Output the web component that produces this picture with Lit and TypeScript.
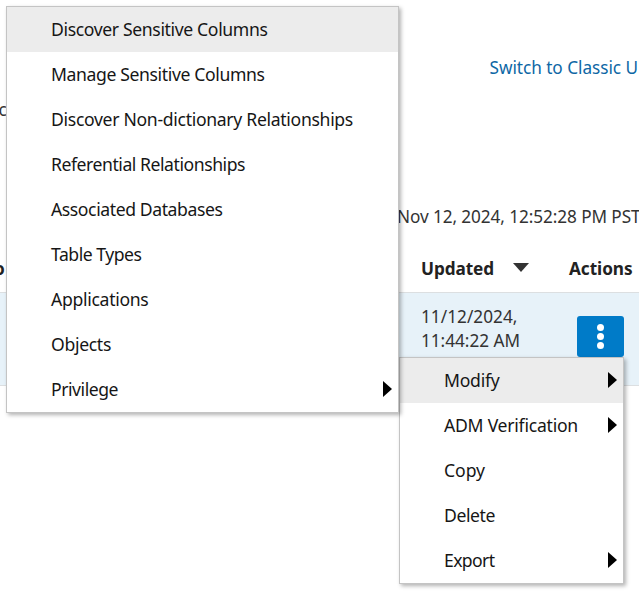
import { LitElement, html, css, nothing } from "lit";
import { customElement, property } from "lit/decorators.js";

interface Entry {
  label: string;
  width: number;
  active?: boolean;
  submenu?: boolean;
}

const MODIFY_ITEMS: Entry[] = [
  { label: "Discover Sensitive Columns", width: 216.5, active: true },
  { label: "Manage Sensitive Columns", width: 213.5 },
  { label: "Discover Non-dictionary Relationships", width: 302 },
  { label: "Referential Relationships", width: 194 },
  { label: "Associated Databases", width: 171.5 },
  { label: "Table Types", width: 90.5 },
  { label: "Applications", width: 97.5 },
  { label: "Objects", width: 60 },
  { label: "Privilege", width: 67, submenu: true },
];

const ACTION_ITEMS: Entry[] = [
  { label: "Modify", width: 55.5, active: true, submenu: true },
  { label: "ADM Verification", width: 134, submenu: true },
  { label: "Copy", width: 41 },
  { label: "Delete", width: 51 },
  { label: "Export", width: 50.5, submenu: true },
];

/** A single line of text whose tracking is tuned to fill a given width. */
@customElement("fit-text")
export class FitText extends LitElement {
  @property() text = "";
  @property({ type: Number }) width = 0;

  static styles = css`
    :host { display: block; white-space: nowrap; }
    .line { display: inline-block; }
  `;

  updated() {
    const line = this.renderRoot.querySelector<HTMLElement>(".line")!;
    line.style.letterSpacing = "0";
    const natural = line.getBoundingClientRect().width;
    line.style.letterSpacing = `${(this.width - natural) / this.text.length}px`;
  }

  render() {
    return html`<span class="line">${this.text}</span>`;
  }
}

@customElement("popup-menu")
export class PopupMenu extends LitElement {
  @property({ attribute: false }) items: Entry[] = [];

  static styles = css`
    :host {
      display: block;
      box-sizing: border-box;
      background: #fff;
      border: 1px solid #c4c4c4;
      box-shadow: 2px 2px 4px rgba(0, 0, 0, 0.3);
      color: #161616;
      font-size: 17.6px;
    }
    .item {
      display: flex;
      align-items: center;
      justify-content: space-between;
      height: 45px;
      padding: 0 6px 2px 44px;
      box-sizing: border-box;
    }
    .active { background: #ececec; }
    .arrow { display: block; width: 9px; height: 16px; fill: #000; }
  `;

  render() {
    return this.items.map(
      (item) => html`
        <div class="item ${item.active ? "active" : ""}">
          <fit-text .text=${item.label} .width=${item.width}></fit-text>
          ${item.submenu
            ? html`<svg class="arrow" viewBox="0 0 9 16"><path d="M0 0L9 8L0 16Z" /></svg>`
            : nothing}
        </div>
      `
    );
  }
}

@customElement("app-root")
export class AppRoot extends LitElement {
  static styles = css`
    :host {
      display: block;
      position: relative;
      height: 594px;
      overflow: hidden;
      background: #fff;
      color: #333;
      font-family: "Noto Sans", "Open Sans", sans-serif;
      font-size: 17.2px;
      line-height: 24px;
    }
    .top { display: flex; padding: 56px 0 0 489.5px; color: #0e67a5; }
    .crumb { height: 24px; margin-top: 18px; margin-left: -1.5px; }
    .stamp { padding: 83px 0 0 397px; }
    .head {
      display: flex;
      box-sizing: border-box;
      height: 64px;
      padding-top: 28px;
      border-bottom: 1px solid #dcdfe1;
      color: #222;
      font-weight: 700;
    }
    .owner { width: 421px; text-indent: -6px; }
    .updated { display: flex; gap: 19px; width: 148px; }
    .sort { width: 16px; height: 9px; margin-top: 6px; fill: #333; }
    .row {
      display: flex;
      box-sizing: border-box;
      height: 93px;
      padding-left: 421px;
      background: #e7f2f9;
      border-bottom: 1px solid #dcdfe1;
    }
    .date { width: 156px; padding-top: 12px; }
    .more {
      display: flex;
      flex-direction: column;
      align-items: center;
      justify-content: center;
      gap: 2px;
      width: 47px;
      height: 41px;
      margin-top: 23px;
      border-radius: 3px;
      background: #007bc8;
    }
    .dot { width: 7px; height: 7px; border-radius: 50%; background: #fff; }
    .actions { position: absolute; left: 399px; top: 357px; width: 225px; }
    .modify { position: absolute; left: 6px; top: 6px; width: 393px; }
  `;

  render() {
    return html`
      <div class="top"><fit-text .text=${"Switch to Classic U"} .width=${148.5}></fit-text></div>
      <div class="crumb">c</div>
      <div class="stamp"><fit-text .text=${"Nov 12, 2024, 12:52:28 PM PST"} .width=${243.5}></fit-text></div>
      <div class="head">
        <div class="owner">o</div>
        <div class="updated">
          <fit-text .text=${"Updated"} .width=${73}></fit-text>
          <svg class="sort" viewBox="0 0 16 9"><path d="M0 0H16L8 9Z" /></svg>
        </div>
        <fit-text .text=${"Actions"} .width=${63.5}></fit-text>
      </div>
      <div class="row">
        <div class="date">
          <fit-text .text=${"11/12/2024,"} .width=${96.5}></fit-text>
          <fit-text .text=${"11:44:22 AM"} .width=${99}></fit-text>
        </div>
        <div class="more">
          <span class="dot"></span><span class="dot"></span><span class="dot"></span>
        </div>
      </div>
      <popup-menu class="actions" .items=${ACTION_ITEMS}></popup-menu>
      <popup-menu class="modify" .items=${MODIFY_ITEMS}></popup-menu>
    `;
  }
}
